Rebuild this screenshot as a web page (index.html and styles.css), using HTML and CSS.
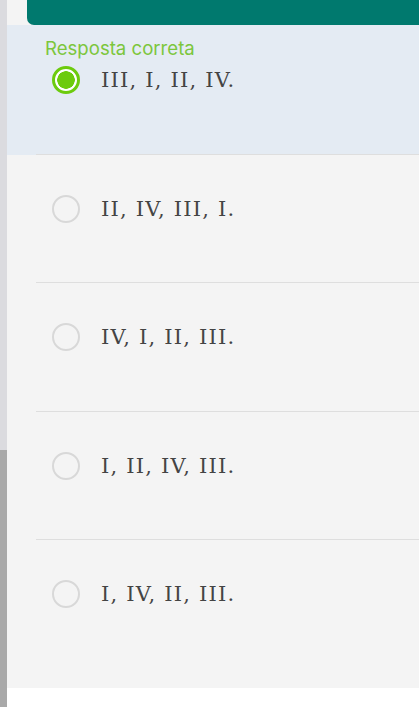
FILE: index.html
```html
<!DOCTYPE html>
<html lang="pt">
<head>
<meta charset="utf-8">
<link rel="stylesheet" href="styles.css">
</head>
<body>
<div class="rail">
  <div class="rail-track"></div>
  <div class="rail-thumb"></div>
</div>
<main class="main">
  <div class="top">
    <div class="top-bar"></div>
  </div>
  <div class="options">
    <div class="option is-correct">
      <div class="option-inner">
        <div class="correct-label">Resposta correta</div>
        <div class="choice">
          <span class="radio radio-on"></span>
          <span class="choice-text">III, I, II, IV.</span>
        </div>
      </div>
    </div>
    <div class="option">
      <div class="option-inner">
        <div class="choice">
          <span class="radio"></span>
          <span class="choice-text">II, IV, III, I.</span>
        </div>
      </div>
    </div>
    <div class="option">
      <div class="option-inner">
        <div class="choice">
          <span class="radio"></span>
          <span class="choice-text">IV, I, II, III.</span>
        </div>
      </div>
    </div>
    <div class="option">
      <div class="option-inner">
        <div class="choice">
          <span class="radio"></span>
          <span class="choice-text">I, II, IV, III.</span>
        </div>
      </div>
    </div>
    <div class="option">
      <div class="option-inner last">
        <div class="choice">
          <span class="radio"></span>
          <span class="choice-text">I, IV, II, III.</span>
        </div>
      </div>
    </div>
  </div>
</main>
</body>
</html>
```

FILE: styles.css
```css
* {
  box-sizing: border-box;
}

html, body {
  margin: 0;
  height: 707px;
  overflow: hidden;
  background: #ffffff;
}

body {
  display: flex;
  font-family: "DejaVu Serif", serif;
}

.rail {
  width: 7px;
  display: flex;
  flex-direction: column;
  flex-shrink: 0;
}

.rail-track {
  height: 450px;
  background: #dbdbdf;
}

.rail-thumb {
  flex: 1;
  background: #a9a9a9;
}

.main {
  flex: 1;
  display: flex;
  flex-direction: column;
  background: #ffffff;
}

.top {
  background: #f4f4f4;
  padding-left: 20px;
}

.top-bar {
  height: 25px;
  background: #00796e;
  border-bottom-left-radius: 7px;
}

.options {
  background: #f4f4f4;
  padding-bottom: 20px;
}

.option {
  padding-left: 29px;
}

.option.is-correct {
  background: #e4ebf3;
}

.option-inner {
  height: 128.33px;
  padding-top: 40px;
  padding-left: 16px;
  border-bottom: 1px solid #dedede;
}

.option-inner.last {
  border-bottom: none;
  height: 128px;
}

.is-correct .option-inner {
  height: 130px;
  padding-top: 12px;
  padding-left: 9px;
}

.correct-label {
  font-family: Inter, Roboto, "Liberation Sans", sans-serif;
  font-size: 18.6px;
  line-height: 22px;
  color: #7cc63c;
  margin-bottom: 7px;
}

.is-correct .choice {
  padding-left: 7px;
}

.choice {
  display: flex;
  align-items: center;
  gap: 21px;
  height: 28px;
}

.radio {
  width: 28px;
  height: 28px;
  border-radius: 50%;
  border: 2px solid #d8d8d8;
  flex-shrink: 0;
}

.radio-on {
  border: 3px solid #6ccb0d;
  background: radial-gradient(circle, #6ccb0d 0 8.5px, #ffffff 9px);
}

.choice-text {
  font-size: 21px;
  line-height: 28px;
  letter-spacing: 1.2px;
  color: #444444;
}
```
